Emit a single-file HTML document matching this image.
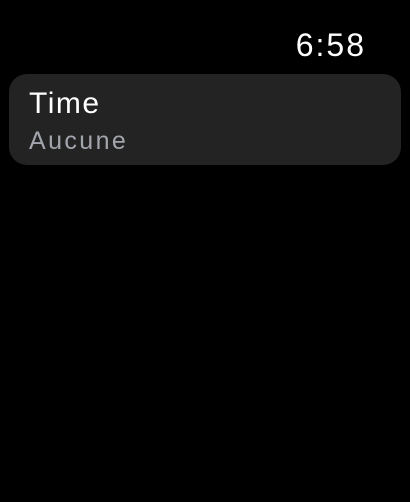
<html><head><style>
body{margin:0;width:410px;height:502px;background:#000;font-family:"Liberation Sans",sans-serif;position:relative;overflow:hidden}
.clock{position:absolute;right:44px;top:27px;font-size:32px;color:#fff;font-weight:normal;letter-spacing:2px}
.card{position:absolute;left:9px;top:74px;width:392px;height:91px;background:#232323;border-radius:18px}
.t{position:absolute;left:20px;top:13px;font-size:30px;color:#fff;letter-spacing:1.5px}
.s{position:absolute;left:20px;top:53px;font-size:25px;color:#a3a5ad;letter-spacing:2.4px}
</style></head><body>
<div class="clock">6:58</div>
<div class="card"><div class="t">Time</div><div class="s">Aucune</div></div>
</body></html>
